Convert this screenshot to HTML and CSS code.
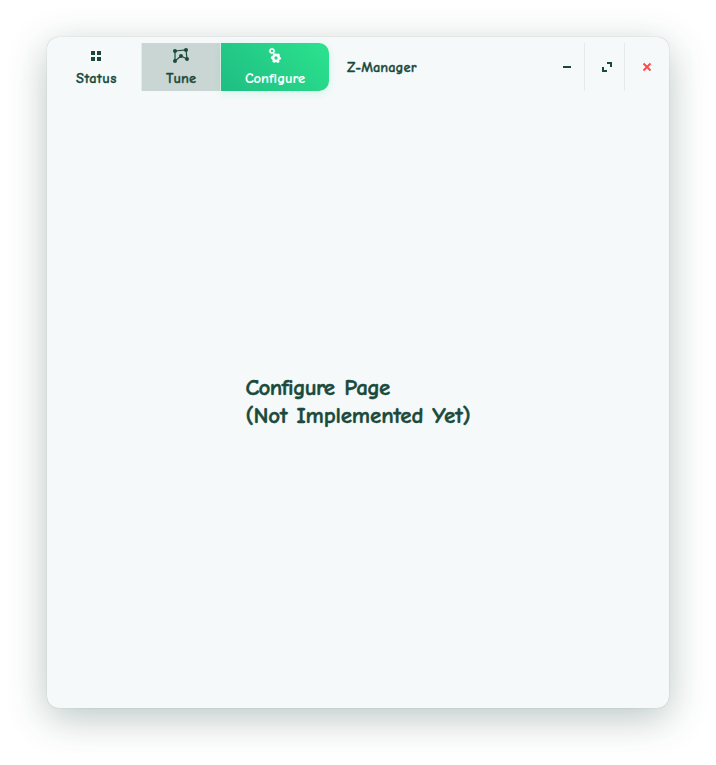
FILE: index.html
```html
<!DOCTYPE html>
<html lang="en">
<head>
<meta charset="utf-8">
<title>Z-Manager</title>
<link rel="stylesheet" href="styles.css">
</head>
<body>
<div class="window">
  <header class="titlebar">
    <nav class="tabs">
      <button class="tab tab-status">
        <svg width="20" height="20" viewBox="0 0 20 20" fill="currentColor" shape-rendering="crispEdges"><path d="M5 5h4v4H5zM11 5h4v4h-4zM5 11h4v4H5zM11 11h4v4h-4z"/></svg>
        <span class="label label-status">Status</span>
      </button>
      <button class="tab tab-tune">
        <svg width="20" height="20" viewBox="0 0 20 20" fill="currentColor"><path d="M4 5L15 4L16 13L10 10L4 15Z" fill="none" stroke="currentColor" stroke-width="1.2"/><circle cx="4" cy="5" r="2"/><circle cx="15" cy="4" r="2"/><circle cx="16" cy="13" r="2"/><circle cx="10" cy="10" r="2"/><circle cx="4" cy="15" r="2"/></svg>
        <span class="label label-tune">Tune</span>
      </button>
      <button class="tab tab-configure">
        <svg width="20" height="20" viewBox="0 0 20 20" fill="none" stroke="currentColor"><circle cx="7" cy="5" r="1.900" stroke-width="1.4"/><circle cx="7" cy="5" r="2.7" stroke-width="1" stroke-dasharray="1.3 .82"/><circle cx="11" cy="12" r="2.9" stroke-width="2.5"/><circle cx="11" cy="12" r="4.4" stroke-width="1.5" stroke-dasharray="2.5 2.108" stroke-dashoffset="1.25"/></svg>
        <span class="label label-configure">Configure</span>
      </button>
    </nav>
    <span class="title">Z-Manager</span>
    <div class="controls">
      <button class="control"><svg width="12" height="12" fill="currentColor" shape-rendering="crispEdges"><path d="M2 5h8v2H2z"/></svg></button>
      <button class="control"><svg width="12" height="12" fill="currentColor" shape-rendering="crispEdges"><path d="M6 1h5v5H9V3H6zM1 6h2v3h3v2H1z"/></svg></button>
      <button class="control close"><svg width="12" height="12" fill="none" stroke="currentColor" stroke-width="2"><path d="M2.5 2.5l7 7M9.500 2.500l-7 7"/></svg></button>
    </div>
  </header>
  <main class="page">
    <div class="message">
      <p class="line line-page">Configure Page</p>
      <p class="line line-note">(Not Implemented Yet)</p>
    </div>
  </main>
</div>
</body>
</html>
```

FILE: styles.css
```css
* { box-sizing: border-box; }
body {
  margin: 0;
  height: 765px;
  padding: 37px 47px 57px;
  overflow: hidden;
  background: #fff;
  color: #1a4a3c;
  font-family: "Comic Neue", "Comic Sans MS", Lato, sans-serif;
}
.window {
  height: 671px;
  display: flex;
  flex-direction: column;
  border-radius: 12px;
  background: #f5f9fa;
  box-shadow: 0 0 1px rgba(26, 74, 60, .35), 0 10px 38px rgba(26, 65, 55, .3);
}
.titlebar {
  display: flex;
  height: 60px;
  padding: 6px 5px 6px 5px;
}
button {
  margin: 0;
  padding: 0;
  border: 0;
  background: none;
  color: inherit;
  font: inherit;
}
svg { display: block; }
.tabs { display: flex; gap: 1px; width: 277px; }
.tab {
  display: flex;
  flex-direction: column;
  align-items: center;
  justify-content: flex-start;
  height: 48px;
  padding-top: 3px;
}
.tab-status { width: 89px; }
.tab-status svg { margin-left: -1px; }
.tab-tune {
  width: 78px;
  background: #cad6d3;
  box-shadow: -1px 0 #e3eae9, 1px 0 #e3eae9;
}
.tab-configure {
  width: 108px;
  border-radius: 0 10px 10px 0;
  background: linear-gradient(45deg, #1fbd82, #2be38e);
  box-shadow: 0 2px 8px rgba(43, 227, 142, .16);
  color: #fff;
}
.label, .title {
  font-size: 14.5px;
  font-weight: 700;
  line-height: 20px;
  white-space: nowrap;
  -webkit-text-stroke: .3px currentColor;
}
.label { margin-top: 3px; }
.label-status { letter-spacing: .45px; }
.label-configure { -webkit-text-stroke-width: .1px; }
.title { margin: 15px 0 0 18px; }
.controls { display: flex; margin-left: auto; }
.control {
  display: grid;
  place-items: center;
  width: 40px;
  height: 48px;
  padding-left: 5px;
}
.control + .control { border-left: 1px solid #e5ebed; padding-left: 4px; }
.close { color: #fb4c4c; }
.page {
  flex: 1;
  display: grid;
  place-items: center;
}
.message { width: 225px; margin-top: -1px; }
.line {
  margin: 0;
  font-size: 23px;
  font-weight: 700;
  line-height: 28px;
  white-space: nowrap;
  word-spacing: 1px;
  -webkit-text-stroke: .45px currentColor;
}
.line-page { letter-spacing: -.75px; word-spacing: 2.5px; }
.line-note { letter-spacing: -.17px; }
```
